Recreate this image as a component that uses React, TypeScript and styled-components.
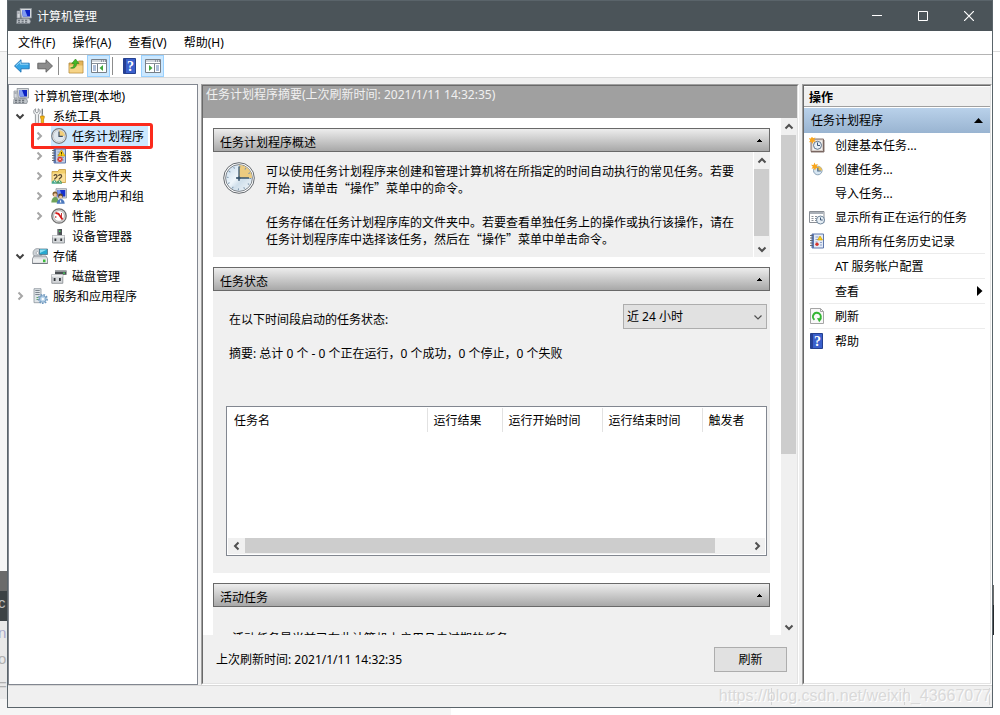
import React from 'react';
import styled, { createGlobalStyle, css } from 'styled-components';

const ui = `"Noto Sans", "Noto Sans CJK SC", sans-serif`;
const cjk = `"Noto Sans CJK SC", "Noto Sans", sans-serif`;

const GlobalStyle = createGlobalStyle`
  *, *::before, *::after { box-sizing: border-box; }
  html, body { margin: 0; padding: 0; background: #fff; }
  body { font: 12px/17px ${ui}; color: #000; overflow: hidden; }
  button, select { font: inherit; color: inherit; }
  button { background: none; border: 0; padding: 0; margin: 0; text-align: left; }
  svg { display: block; flex: none; }
  ul { list-style: none; margin: 0; padding: 0; }
  h1, h2, p { margin: 0; font: inherit; }
`;

/* ---------- page behind the window ---------- */

const Desktop = styled.div`
  display: grid;
  grid-template-columns: 7px minmax(0, 1fr) 7px;
  height: 100vh;
`;

const Sliver = styled.div`
  display: flex;
  flex-direction: column;
  overflow: hidden;
`;

const Strip = styled.div<{ $bg: string; $h?: number; $line?: boolean; $fg?: string }>`
  background: ${p => p.$bg};
  color: ${p => p.$fg || '#b0b0b0'};
  ${p => (p.$h ? css`flex: none; height: ${p.$h}px;` : css`flex: 1;`)}
  ${p => p.$line && css`border-bottom: 1px solid #dcdcdc;`}
  font: 15px/24px "Liberation Sans", sans-serif;
  text-indent: -2px;
  overflow: hidden;
`;

const EdgeStrip = styled(Strip)`
  width: 1px;
`;

const Centre = styled.div`
  display: flex;
  flex-direction: column;
  min-height: 0;
`;

const BelowWindow = styled.div`
  flex: none;
  height: 7px;
  background: linear-gradient(to right, #f5f5f5 45%, #fff 45%);
`;

/* ---------- window frame ---------- */

const Window = styled.main`
  flex: 1;
  min-height: 0;
  display: flex;
  flex-direction: column;
  background: #f0f0f0;
  border: solid #5a646a;
  border-width: 0 1px 1px;
`;

const TitleBar = styled.header`
  flex: none;
  display: flex;
  align-items: center;
  height: 31px;
  padding-left: 8px;
  background: #4b5459;
  border-top: 1px solid #5a646a;
  color: #fff;
  h1 { flex: 1; margin-left: 5px; }
`;

const CaptionButton = styled.button`
  display: flex;
  align-items: center;
  justify-content: center;
  width: 46px;
  height: 30px;
`;

const MenuBar = styled.nav`
  flex: none;
  display: flex;
  gap: 1px;
  height: 24px;
  padding: 0 2px;
  background: #fff;
  border-bottom: 1px solid #b4b4b4;
`;

const MenuButton = styled.button`
  padding: 0 8px;
`;

const ToolBar = styled.div`
  flex: none;
  display: flex;
  align-items: center;
  height: 23px;
  padding-left: 2px;
  background: #fff;
  border-bottom: 1px solid #dadada;
`;

const ToolButton = styled.button<{ $on?: boolean }>`
  display: flex;
  align-items: center;
  justify-content: center;
  width: 23px;
  height: 22px;
  border: 1px solid ${p => (p.$on ? '#99d1ff' : 'transparent')};
  background: ${p => (p.$on ? '#cce8ff' : 'transparent')};
`;

const ToolRule = styled.span`
  width: 1px;
  height: 18px;
  margin: 0 5px 0 2px;
  background: #8c8c8c;
`;

const Workspace = styled.div`
  flex: 1;
  min-height: 0;
  display: flex;
  padding-top: 6px;
`;

const StatusBar = styled.footer`
  flex: none;
  display: flex;
  justify-content: flex-end;
  height: 22px;
  padding: 2px 2px 2px 0;
  border-top: 1px solid #d7d7d7;
`;

const StatusCell = styled.span<{ $w: number }>`
  width: ${p => p.$w}px;
  border-right: 1px solid #d4d4d4;
`;

const StatusText = styled.span`
  position: absolute;
  right: 9px;
  bottom: 8px;
  font: 16px/22px "Liberation Sans", sans-serif;
  color: #d9d9d9;
  text-shadow: 1px 1px 0 #fff;
`;

/* ---------- navigation tree ---------- */

const TreePane = styled.ul`
  flex: none;
  width: 190px;
  padding: 1px 4px;
  background: #fff;
  border: 1px solid #828790;
`;

const TreeRow = styled.li<{ $level: number }>`
  display: flex;
  align-items: center;
  height: 20px;
  padding-left: ${p => (p.$level === 2 ? 19 : 0)}px;
  position: relative;
`;

const Twisty = styled.button`
  display: flex;
  align-items: center;
  justify-content: center;
  width: 19px;
  height: 20px;
  padding-right: 5px;
`;

const TreeLabel = styled.button<{ $selected?: boolean }>`
  display: flex;
  align-items: center;
  gap: 5px;
  height: 20px;
  padding-right: 4px;
  background: ${p => (p.$selected ? '#cce8ff' : 'transparent')};
`;

const Marker = styled.span`
  position: absolute;
  left: 18px;
  top: -3px;
  width: 122px;
  height: 26px;
  border: 3px solid #fb2a1c;
  border-radius: 3px;
  pointer-events: none;
`;

/* ---------- centre pane ---------- */

const sunken = css`
  border: 1px solid;
  border-color: #a0a0a0 #fff #fff #a0a0a0;
`;

const sunkenInner = css`
  border: 1px solid;
  border-color: #696969 #e3e3e3 #e3e3e3 #696969;
`;

const SummaryPane = styled.section`
  flex: 1;
  min-width: 0;
  display: flex;
  margin: 0 3px;
  ${sunken}
`;

const PaneInner = styled.div`
  flex: 1;
  min-width: 0;
  display: flex;
  flex-direction: column;
  ${sunkenInner}
`;

const PaneTitle = styled.h2`
  flex: none;
  height: 32px;
  padding: 0 3px;
  background: #a0a0a0;
  color: #f0f0f0;
`;

const ScrollArea = styled.div`
  flex: 1;
  min-height: 0;
  display: flex;
  background: #fff;
`;

const Sections = styled.div`
  flex: 1;
  min-width: 0;
  display: flex;
  flex-direction: column;
  gap: 10px;
  padding: 10px 11px 0 10px;
  overflow: hidden;
`;

const Section = styled.section`
  flex: none;
  background: #f0f0f0;
`;

const SectionTitle = styled.button`
  display: flex;
  align-items: center;
  justify-content: space-between;
  width: 100%;
  height: 24px;
  padding: 4px 7px 0 6px;
  border: 1px solid #696969;
  background: linear-gradient(#ededed, #a8a8a8);
  svg { margin-bottom: 4px; }
`;

const Overview = styled.div`
  display: flex;
`;

const OverviewBody = styled.div`
  flex: 1;
  display: flex;
  align-items: flex-start;
  gap: 11px;
  padding: 10px 18px 10px 10px;
  border-right: 1px solid #fff;
`;

const OverviewText = styled.div`
  font-family: ${cjk};
  p + p { margin-top: 17px; }
`;

const StatusBody = styled.div`
  padding: 13px 3px 17px 13px;
`;

const FilterRow = styled.div`
  display: flex;
  align-items: center;
  justify-content: space-between;
  padding-left: 3px;
  label { padding-top: 5px; }
`;

const SelectBox = styled.div`
  display: grid;
  width: 144px;
  > * { grid-area: 1 / 1; }
  svg { align-self: center; justify-self: end; margin-right: 4px; pointer-events: none; }
`;

const Select = styled.select`
  appearance: none;
  height: 25px;
  padding: 0 3px;
  border: 1px solid #adadad;
  border-radius: 0;
  background: #e1e1e1;
`;

const SummaryLine = styled.p`
  margin: 16px 0 44px;
  padding-left: 3px;
`;

const ListBox = styled.div`
  display: flex;
  flex-direction: column;
  justify-content: space-between;
  height: 150px;
  padding: 1px;
  background: #fff;
  border: 1px solid #828790;
`;

const Table = styled.table`
  width: 100%;
  table-layout: fixed;
  border-collapse: collapse;
`;

const Th = styled.th<{ $w?: number }>`
  ${p => p.$w && css`width: ${p.$w}px;`}
  height: 24px;
  padding: 0 0 0 6px;
  font-weight: 400;
  text-align: left;
  white-space: nowrap;
  border-right: 1px solid #e2e2e2;
  &:last-child { border-right: 0; }
`;

const ActiveText = styled.p`
  padding: 23px 19px;
`;

const PaneFooter = styled.div`
  flex: none;
  display: flex;
  align-items: center;
  justify-content: space-between;
  height: 48px;
  padding: 0 10px 0 13px;
`;

const PushButton = styled.button`
  width: 73px;
  height: 25px;
  text-align: center;
  border: 1px solid #adadad;
  background: #e1e1e1;
`;

/* ---------- scroll bars ---------- */

const VBar = styled.div`
  flex: none;
  display: flex;
  flex-direction: column;
  width: 16px;
  padding-right: 1px;
  background: #f0f0f0;
`;

const HBar = styled.div`
  display: flex;
  height: 16px;
  padding-bottom: 1px;
  background: #f0f0f0;
`;

const Arrow = styled.button<{ $wide?: boolean }>`
  flex: none;
  display: flex;
  align-items: center;
  justify-content: center;
  width: ${p => (p.$wide ? '17px' : '100%')};
  height: ${p => (p.$wide ? '15px' : '17px')};
`;

const Track = styled.div<{ $row?: boolean }>`
  flex: 1;
  min-height: 0;
  display: flex;
  flex-direction: ${p => (p.$row ? 'row' : 'column')};
`;

const Thumb = styled.div<{ $size: string }>`
  flex: 0 0 ${p => p.$size};
  background: #cdcdcd;
`;

/* ---------- action pane ---------- */

const ActionPane = styled.aside`
  flex: none;
  width: 190px;
  display: flex;
  ${sunken}
`;

const ActionInner = styled(PaneInner)`
  background: #fff;
`;

const ActionTitle = styled.h2`
  height: 21px;
  padding: 2px 5px;
  font-weight: 700;
  background: #f0f0f0;
  border-top: 1px solid #fff;
  border-bottom: 1px solid #a0a0a0;
`;

const ActionGroup = styled.button`
  display: flex;
  align-items: center;
  justify-content: space-between;
  height: 25px;
  margin-top: 1px;
  padding: 0 7px;
  background: linear-gradient(#b9d1ea, #99b4d1);
`;

const ActionList = styled.ul`
  padding: 0 5px;
`;

const ActionItem = styled.li<{ $rule?: boolean }>`
  ${p => p.$rule && css`border-top: 1px solid #ececec;`}
`;

const ActionButton = styled.button`
  display: flex;
  align-items: center;
  width: 100%;
  height: 24px;
  gap: 10px;
  span { flex: 1; }
`;

const IconSlot = styled.i`
  width: 16px;
  height: 16px;
`;

/* ---------- icons ---------- */

const Svg = ({ w = 16, h = 16, children }: { w?: number; h?: number; children: React.ReactNode }) => (
  <svg width={w} height={h} viewBox={`0 0 ${w} ${h}`} fill="none" aria-hidden="true">{children}</svg>
);

const ComputerIcon = () => (
  <Svg>
    <path d="M4 .5h11.500v9.500H5.500z" fill="#d6d9dc" stroke="#8c9298" strokeWidth=".8" />
    <path d="M6 2h8v6.500H6.800z" fill="#0b22c4" />
    <path d="M6 2h3l2.500 6.500H6.800z" fill="#7f9bf0" />
    <path d="M1 3h3.200v7H1z" fill="#d4d8dc" stroke="#8d949b" strokeWidth=".7" />
    <path d="M1.500 5h2" stroke="#6f767d" strokeWidth=".8" />
    <path d="M6.500 9.500h6v1.500h-6z" fill="#9aa1a8" />
    <path d="M1 10.800h12.500l1 2.500-.8 2.200H.5z" fill="#c1c6cb" stroke="#7d848b" strokeWidth=".7" />
    <path d="M2 12.300h2.200M5.500 12.300h2.200M9 12.300h2.200M2 14.200h2.200M5.500 14.200h2.200M9 14.200h2.200" stroke="#565d64" />
  </Svg>
);

const ToolsIcon = () => (
  <Svg>
    <path d="M3.600 .8v3l1.300 1 1.300-1v-3c1.400.6 2 1.800 2 3S7.500 6 6.600 6.500V14.500c0 1.300-3.200 1.300-3.200 0V6.500C2.400 6 1.700 5 1.700 3.800s.6-2.400 1.900-3z" fill="#eceeef" stroke="#7d8388" strokeWidth=".8" />
    <path d="M10.300 .7v5.500" stroke="#70767b" strokeWidth="1.300" />
    <path d="M10.300 6v3" stroke="#9aa0a5" strokeWidth="1.600" />
    <path d="M8.600 8h3.600v2l-.6 1v3.500c0 1-2.400 1-2.400 0V11l-.6-1z" fill="#f5b816" stroke="#b97c05" strokeWidth=".7" />
  </Svg>
);

const SmallClockIcon = () => (
  <Svg>
    <circle cx="8" cy="8" r="7.300" fill="#f0f1f2" stroke="#767d84" strokeWidth="1.200" />
    <circle cx="8" cy="8" r="5.800" fill="#dfe7ee" stroke="#a9afb5" strokeWidth=".5" />
    <path d="M8 8V2.200A5.800 5.800 0 0 1 13.800 8z" fill="#f2cf7c" />
    <path d="M8 3.500V8.300h3.800" stroke="#3c4f66" strokeWidth="1.200" />
  </Svg>
);

const LogIcon = ({ alert }: { alert?: boolean }) => (
  <Svg>
    <path d="M3 1h11.500v14H3z" fill={alert ? '#c3d0e6' : '#e4ebf7'} stroke="#5f79ad" />
    <path d="M3 1h2v14H3z" fill="#5c78b2" />
    <path d="M1 2.500h3M1 5h3M1 7.500h3M1 10h3M1 12.500h3" stroke="#5b6068" strokeWidth=".9" />
    <path d="M6.500 4h3M6.500 6.500h3M6.500 9h2M11 9.500h2M11 12h2" stroke="#7890bb" strokeWidth=".8" />
    <path d={alert ? 'M10.500 2l3.700 6H6.800z' : 'M11 3l2.500 4h-5z'} fill="#fbd016" stroke="#c79000" strokeWidth=".6" />
    {alert && <path d="M10.500 4v2M10.500 6.600v.8" stroke="#332900" strokeWidth=".9" />}
    <circle cx={alert ? 9 : 8} cy="11.300" r={alert ? 2.600 : 1.700} fill="#d8352c" />
    {alert && <path d="M8 10.300l2 2m0-2l-2 2" stroke="#fff" strokeWidth=".8" />}
  </Svg>
);

const SharedFolderIcon = () => (
  <Svg>
    <path d="M1 3.500h6l1-2h6.500v13H1z" fill="#f3cf6b" stroke="#c2973a" strokeWidth=".8" />
    <path d="M1.500 5.500h12.800V14H1.500z" fill="#fbe09a" />
    <path d="M3 8c.3-1.800 3-1.700 3 .2 0 1.300-2.200 1.600-2.500 3.300M7.600 8c.3-1.800 3-1.700 3 .2 0 1.300-2.200 1.600-2.500 3.300" stroke="#5d4a30" strokeWidth="1.300" />
    <path d="M.6 15.800c0-4.600 5.400-4.600 5.400 0z" fill="#46a98f" />
    <path d="M5.600 15.800c0-4.600 5.400-4.600 5.400 0z" fill="#4c9d6c" />
    <path d="M3.200 13l1 1.600M8.200 13l1 1.600" stroke="#fff" strokeWidth=".8" />
  </Svg>
);

const UsersIcon = () => (
  <Svg>
    <path d="M5 .7h10.500V10H5z" fill="#d6dade" stroke="#8b9299" strokeWidth=".8" />
    <path d="M6.300 2h8v6.500h-8z" fill="#1530cf" />
    <path d="M6.300 2H9l2 6.500H6.300z" fill="#7a97ef" />
    <circle cx="4" cy="6" r="2.500" fill="#7d5a2c" />
    <circle cx="4.200" cy="7" r="1.700" fill="#f0c79c" />
    <path d="M.3 14.500c0-7.500 7.500-7.500 7.500 0z" fill="#6fa35a" />
    <circle cx="9.500" cy="8" r="2.400" fill="#5a4630" />
    <circle cx="9.600" cy="9" r="1.600" fill="#f0c79c" />
    <path d="M5.700 15.800c0-6.500 8-6.500 8 0z" fill="#4c79bd" />
    <path d="M9.600 11.500l-.8 3h1.600z" fill="#fff" />
  </Svg>
);

const PerformanceIcon = () => (
  <Svg>
    <circle cx="8" cy="8" r="7.200" fill="#dcdcdc" stroke="#6d6d6d" strokeWidth="1.300" />
    <circle cx="8" cy="8" r="5.400" fill="#fff" stroke="#9a9a9a" strokeWidth=".7" />
    <path d="M4.500 4.800l3 1 4 5.700" stroke="#d61a1a" strokeWidth="1.800" />
    <path d="M10.500 5v4M4.800 8v2" stroke="#c4393a" />
  </Svg>
);

const DeviceIcon = () => (
  <Svg>
    <path d="M6.500 1h4.500v7H6.500z" fill="#4c5054" />
    <path d="M8 2.500h1.500V4H8z" fill="#45d45c" />
    <path d="M6.500 1h1v7h-1z" fill="#85898d" />
    <path d="M1.500 7.500h12v7.500h-12z" fill="#d4d7da" stroke="#83888d" strokeWidth=".8" />
    <path d="M1.500 7.500h12v2h-12z" fill="#f1f2f3" />
    <path d="M3.500 10.500h1.800v2.500H3.500zM9.300 10.500h1.800v2.500H9.300z" fill="#33373b" />
  </Svg>
);

const StorageIcon = () => (
  <Svg>
    <circle cx="5.500" cy="5" r="4.500" fill="#ced3d8" stroke="#8a9197" strokeWidth=".7" />
    <circle cx="5.500" cy="5" r="1.400" fill="#fff" stroke="#8a9197" strokeWidth=".6" />
    <path d="M7.500 1h8v5.500h-8z" fill="#28a8cf" stroke="#49697a" strokeWidth=".7" />
    <path d="M8 1.500h7L8 5z" fill="#8fe0f2" />
    <path d="M2 8h12l1.500 2.500v5H.5v-5z" fill="#d3d6d9" stroke="#7e848a" strokeWidth=".8" />
    <path d="M1 10.500h14v4.700H1z" fill="#eceeef" />
    <path d="M11 11.500h2.500v2.700H11z" fill="#3cbb3c" />
    <path d="M.5 15.400h15" stroke="#6f757b" />
  </Svg>
);

const DiskIcon = () => (
  <Svg>
    <path d="M4 2.500h11.500v4.300H4z" fill="#4b4f53" />
    <path d="M4 2.500h11.500v1.300H4z" fill="#a5a9ad" />
    <path d="M12 4.500h2v1.200h-2z" fill="#45d45c" />
    <path d="M.8 6.500h11v8.800H.8z" fill="#d4d7da" stroke="#83888d" strokeWidth=".8" />
    <path d="M.8 6.500h11v2.200H.8z" fill="#f1f2f3" />
    <path d="M2.700 10h1.800v3H2.700zM8 10h1.800v3H8z" fill="#33373b" />
  </Svg>
);

const ServicesIcon = () => (
  <Svg>
    <path d="M2 .7h7v14H2z" fill="#dfe4e8" stroke="#8b949c" strokeWidth=".8" />
    <path d="M3.300 2.500h4.400M3.300 4.500h4.400M3.300 6.500h4.400" stroke="#7d878f" />
    <path d="M4.500 9.500h2M4.500 11.500h2" stroke="#5ea55e" />
    <circle cx="10.800" cy="11" r="4.300" stroke="#6e98bf" strokeWidth="1.600" strokeDasharray="1.700 1.200" />
    <circle cx="10.800" cy="11" r="3.300" fill="#b9d4ea" stroke="#6e98bf" strokeWidth=".9" />
    <circle cx="10.800" cy="11" r="1.200" fill="#fff" />
  </Svg>
);

const BigClockIcon = () => (
  <Svg w={32} h={32}>
    <defs>
      <linearGradient id="face" x1="0" y1="0" x2="1" y2="1">
        <stop offset="0" stopColor="#c5d9ea" />
        <stop offset=".45" stopColor="#eff6fb" />
        <stop offset=".6" stopColor="#cfdfeb" />
        <stop offset="1" stopColor="#f7fafc" />
      </linearGradient>
    </defs>
    <circle cx="16" cy="16" r="15.300" fill="#fff" stroke="#62676c" />
    <circle cx="16" cy="16" r="13.400" fill="url(#face)" stroke="#80868c" />
    <path d="M16 16V3a13 13 0 0 1 13 13z" fill="#eccb80" />
    <circle cx="16" cy="16" r="11.300" stroke="#7d96ad" strokeWidth="1.800" strokeDasharray="1 4.917" />
    <path d="M16 4.500V19M13 16h13" stroke="#39566e" strokeWidth="1.300" />
    <circle cx="16" cy="16" r="1.600" fill="#39566e" />
  </Svg>
);

const ArrowIcon = ({ forward }: { forward?: boolean }) => (
  <Svg>
    {forward
      ? <path d="M15.500 8L9 1.800v3.400H.8v5.600H9v3.400z" fill="#8c8c8c" stroke="#5f5f5f" strokeWidth=".9" />
      : <>
          <path d="M.5 8L7 1.800v3.400h8.200v5.600H7v3.400z" fill="#35a5e6" stroke="#1b6fb3" strokeWidth=".9" />
          <path d="M2.200 7.600L6.300 3.700v2.500h8" stroke="#a5dcf8" strokeWidth=".9" />
        </>}
  </Svg>
);

const FolderUpIcon = () => (
  <Svg>
    <path d="M1 5h8l1.500-2H15v12H1z" fill="#e3b458" stroke="#b0883b" strokeWidth=".8" />
    <path d="M1.500 7.500h13v7h-13z" fill="#f6d488" />
    <path d="M2.500 10c3-.5 3.700-2.500 3.500-4.500H3.800L7.500 1 11 5.500H8.500c0 3.500-2 5.500-6 4.500z" fill="#45b828" stroke="#2b8318" strokeWidth=".6" />
  </Svg>
);

const PaneIcon = ({ right }: { right?: boolean }) => (
  <Svg>
    <path d="M.5 1.500h15v13H.5z" fill="#fff" stroke="#777f88" />
    <path d="M1 2h14v2H1z" fill="#d3d8de" />
    <path d="M10 3h1M12 3h1M14 3h1" stroke="#565d66" />
    <path d="M1 5.500h14" stroke="#8a929b" />
    {right
      ? <>
          <path d="M9.500 6v8.500" stroke="#777f88" />
          <path d="M11 8h3M11 10h3M11 12h3" stroke="#5c7fb5" />
          <path d="M4 7v6l3.500-3z" fill="#40a83c" />
        </>
      : <>
          <path d="M6.500 6v8.500" stroke="#777f88" />
          <path d="M2 8h3M2 10h3M2 12h3" stroke="#5c7fb5" />
          <path d="M12 7v6l-3.500-3z" fill="#40a83c" />
        </>}
  </Svg>
);

const HelpIcon = () => (
  <Svg>
    <path d="M1.500 .5h12v15h-12z" fill="#3a60cc" stroke="#24408f" />
    <path d="M2 1h2v14H2z" fill="#263f94" />
    <text x="5" y="13" fontFamily="Liberation Serif, serif" fontWeight="700" fontSize="14" fill="#fff">?</text>
  </Svg>
);

const star = 'M4 0l.9 2.300L7.500 1.500 6 3.800 8 5.500l-2.600.2L4.500 8 3.400 5.800 1 6.200l1.300-2L.5 2.200l2.500.3z';

const BasicTaskIcon = () => (
  <Svg>
    <path d="M2 2h12.500v12.500H2z" fill="#d5cdc8" stroke="#84706b" />
    <path d="M3.500 3.500h9.500v9.500H3.500z" fill="#f6f3f1" />
    <circle cx="8.500" cy="8.300" r="4" fill="#e8eff5" stroke="#60758c" />
    <path d="M8.500 5.500v3h2.500" stroke="#3d5675" />
    <path d={star} fill="#f9a51b" transform="translate(-1 -1)" />
    <path d="M2 15h13V3" stroke="#6a5854" strokeWidth=".8" />
  </Svg>
);

const TaskIcon = () => (
  <Svg>
    <circle cx="8.800" cy="9.500" r="4.300" fill="#d7e6f2" stroke="#8ca3b8" />
    <path d="M8.800 9.500V5.200a4.300 4.300 0 0 1 4.300 4.300z" fill="#f0c050" />
    <path d="M8.800 6.500V10h3" stroke="#4d6c8c" strokeWidth="1.200" />
    <path d={star} fill="#f9a51b" transform="translate(1.500 1.500)" />
  </Svg>
);

const RunningIcon = () => (
  <Svg>
    <path d="M.5 2.500h14.500v11H.5z" fill="#fff" stroke="#8b9097" />
    <path d="M1 3h13.500v2H1z" fill="#a9afb7" />
    <path d="M2.500 7.500h2M6 7.500h2M9.500 7.500h2M2.500 9.500h2M6 9.500h2M2.500 11.500h2M6 11.500h2" stroke="#8b9097" />
    <circle cx="11.500" cy="11" r="4" fill="#e6eef5" stroke="#71879d" />
    <path d="M11.500 8.500V11h2.200" stroke="#3d5675" />
  </Svg>
);

const RefreshIcon = () => (
  <Svg>
    <path d="M1.500 .5h10l3 3v12h-13z" fill="#f8f8f8" stroke="#a5a5a5" />
    <path d="M11.500 .5v3h3" stroke="#a5a5a5" />
    <path d="M5.500 11.800A3.900 3.900 0 1 1 11 11" stroke="#33b533" strokeWidth="2" />
    <path d="M8 10l5 .5-2.800 3.800z" fill="#33b533" />
  </Svg>
);

const chevrons = {
  up: 'M1.500 6.500L5 3l3.500 3.500',
  down: 'M1.500 3.500L5 7l3.500-3.500',
  left: 'M6.500 1.500L3 5l3.500 3.500',
  right: 'M3.500 1.500L7 5 3.500 8.500',
};

const Chevron = ({ dir, thin, color = '#505050' }: { dir: keyof typeof chevrons; thin?: boolean; color?: string }) => (
  <Svg w={10} h={10}><path d={chevrons[dir]} stroke={color} strokeWidth={thin ? 1.2 : 2} /></Svg>
);

/* ---------- data ---------- */

type Node = { text: string; level: 0 | 1 | 2; icon: React.ReactNode; open?: boolean; leaf?: boolean; selected?: boolean };

const nodes: Node[] = [
  { text: '计算机管理(本地)', level: 0, icon: <ComputerIcon /> },
  { text: '系统工具', level: 1, icon: <ToolsIcon />, open: true },
  { text: '任务计划程序', level: 2, icon: <SmallClockIcon />, selected: true },
  { text: '事件查看器', level: 2, icon: <LogIcon alert /> },
  { text: '共享文件夹', level: 2, icon: <SharedFolderIcon /> },
  { text: '本地用户和组', level: 2, icon: <UsersIcon /> },
  { text: '性能', level: 2, icon: <PerformanceIcon /> },
  { text: '设备管理器', level: 2, icon: <DeviceIcon />, leaf: true },
  { text: '存储', level: 1, icon: <StorageIcon />, open: true },
  { text: '磁盘管理', level: 2, icon: <DiskIcon />, leaf: true },
  { text: '服务和应用程序', level: 1, icon: <ServicesIcon /> },
];

const actions: { text: string; icon?: React.ReactNode; rule?: boolean; sub?: boolean }[] = [
  { text: '创建基本任务...', icon: <BasicTaskIcon /> },
  { text: '创建任务...', icon: <TaskIcon /> },
  { text: '导入任务...' },
  { text: '显示所有正在运行的任务', icon: <RunningIcon /> },
  { text: '启用所有任务历史记录', icon: <LogIcon /> },
  { text: 'AT 服务帐户配置', rule: true },
  { text: '查看', rule: true, sub: true },
  { text: '刷新', icon: <RefreshIcon />, rule: true },
  { text: '帮助', icon: <HelpIcon />, rule: true },
];

const columns: [string, number?][] = [
  ['任务名', 199], ['运行结果', 75], ['运行开始时间', 100], ['运行结束时间', 100], ['触发者'],
];

const Header = ({ children }: { children: string }) => (
  <SectionTitle>
    {children}
    <Svg w={5} h={3}><path d="M2 0h1v1h1v1h1v1H0V2h1V1h1z" fill="#000" /></Svg>
  </SectionTitle>
);

const VScroll = ({ thumb }: { thumb: string }) => (
  <VBar>
    <Arrow aria-label="向上"><Chevron dir="up" /></Arrow>
    <Track><Thumb $size={thumb} /></Track>
    <Arrow aria-label="向下"><Chevron dir="down" /></Arrow>
  </VBar>
);

export default function App() {
  return (
    <>
      <GlobalStyle />
      <Desktop>
        <Sliver>
          <Strip $bg="#fff" $h={52} $line />
          <Strip $bg="#f5f5f5" />
          <Strip $bg="#6b6b6b" $h={20} />
          <Strip $bg="#3c4245" $h={30} $fg="#c0c0c0">c</Strip>
          <Strip $bg="#e9e9e9" $h={26} $fg="#a9a9cc">n</Strip>
          <Strip $bg="#e9e9e9" $h={26}>o</Strip>
          <Strip $bg="#e9e9e9" $h={26}>=</Strip>
          <Strip $bg="#f5f5f5" $h={16} />
        </Sliver>

        <Centre>
          <Window>
            <TitleBar>
              <ComputerIcon />
              <h1>计算机管理</h1>
              <CaptionButton aria-label="最小化"><Svg w={10} h={10}><path d="M0 4.500h10" stroke="#fff" /></Svg></CaptionButton>
              <CaptionButton aria-label="最大化"><Svg w={10} h={10}><path d="M.5 .5h9v9h-9z" stroke="#fff" /></Svg></CaptionButton>
              <CaptionButton aria-label="关闭"><Svg w={10} h={10}><path d="M0 0l10 10M10 0L0 10" stroke="#fff" strokeWidth="1.200" /></Svg></CaptionButton>
            </TitleBar>

            <MenuBar>
              {['文件(F)', '操作(A)', '查看(V)', '帮助(H)'].map(m => <MenuButton key={m}>{m}</MenuButton>)}
            </MenuBar>

            <ToolBar>
              <ToolButton aria-label="后退"><ArrowIcon /></ToolButton>
              <ToolButton aria-label="前进"><ArrowIcon forward /></ToolButton>
              <ToolRule />
              <ToolButton aria-label="上一级"><FolderUpIcon /></ToolButton>
              <ToolButton aria-label="显示树" $on><PaneIcon /></ToolButton>
              <ToolRule />
              <ToolButton aria-label="帮助"><HelpIcon /></ToolButton>
              <ToolButton aria-label="显示操作" $on><PaneIcon right /></ToolButton>
            </ToolBar>

            <Workspace>
              <TreePane>
                {nodes.map(n => (
                  <TreeRow key={n.text} $level={n.level}>
                    {n.level > 0 && (
                      <Twisty aria-label={n.text} disabled={n.leaf}>
                        {!n.leaf && <Chevron dir={n.open ? 'down' : 'right'} color={n.open ? '#404040' : '#a6a6a6'} />}
                      </Twisty>
                    )}
                    <TreeLabel $selected={n.selected}>{n.icon}{n.text}</TreeLabel>
                    {n.selected && <Marker />}
                  </TreeRow>
                ))}
              </TreePane>

              <SummaryPane>
                <PaneInner>
                  <PaneTitle>任务计划程序摘要(上次刷新时间: 2021/1/11 14:32:35)</PaneTitle>
                  <ScrollArea>
                    <Sections>
                      <Section>
                        <Header>任务计划程序概述</Header>
                        <Overview>
                          <OverviewBody>
                            <BigClockIcon />
                            <OverviewText>
                              <p>可以使用任务计划程序来创建和管理计算机将在所指定的时间自动执行的常见任务。若要开始，请单击“操作”菜单中的命令。</p>
                              <p>任务存储在任务计划程序库的文件夹中。若要查看单独任务上的操作或执行该操作，请在任务计划程序库中选择该任务，然后在“操作”菜单中单击命令。</p>
                            </OverviewText>
                          </OverviewBody>
                          <VScroll thumb="94%" />
                        </Overview>
                      </Section>

                      <Section>
                        <Header>任务状态</Header>
                        <StatusBody>
                          <FilterRow>
                            <label htmlFor="period">在以下时间段启动的任务状态:</label>
                            <SelectBox>
                              <Select id="period"><option>近 24 小时</option></Select>
                              <Chevron dir="down" thin />
                            </SelectBox>
                          </FilterRow>
                          <SummaryLine>摘要: 总计 0 个 - 0 个正在运行，0 个成功，0 个停止，0 个失败</SummaryLine>
                          <ListBox>
                            <Table>
                              <thead>
                                <tr>{columns.map(([t, w]) => <Th key={t} $w={w}>{t}</Th>)}</tr>
                              </thead>
                            </Table>
                            <HBar>
                              <Arrow $wide aria-label="向左"><Chevron dir="left" /></Arrow>
                              <Track $row><Thumb $size="93.5%" /></Track>
                              <Arrow $wide aria-label="向右"><Chevron dir="right" /></Arrow>
                            </HBar>
                          </ListBox>
                        </StatusBody>
                      </Section>

                      <Section>
                        <Header>活动任务</Header>
                        <ActiveText>活动任务是当前已在此计算机上启用且未过期的任务。</ActiveText>
                      </Section>
                    </Sections>
                    <VScroll thumb="66%" />
                  </ScrollArea>
                  <PaneFooter>
                    <span>上次刷新时间: 2021/1/11 14:32:35</span>
                    <PushButton>刷新</PushButton>
                  </PaneFooter>
                </PaneInner>
              </SummaryPane>

              <ActionPane>
                <ActionInner>
                  <ActionTitle>操作</ActionTitle>
                  <ActionGroup>
                    任务计划程序
                    <Svg w={9} h={5}><path d="M4.500 0L9 5H0z" fill="#000" /></Svg>
                  </ActionGroup>
                  <ActionList>
                    {actions.map(a => (
                      <ActionItem key={a.text} $rule={a.rule}>
                        <ActionButton>
                          {a.icon || <IconSlot />}
                          <span>{a.text}</span>
                          {a.sub && <Svg w={8} h={10}><path d="M0 0l5.500 5L0 10z" fill="#000" /></Svg>}
                        </ActionButton>
                      </ActionItem>
                    ))}
                  </ActionList>
                </ActionInner>
              </ActionPane>
            </Workspace>

            <StatusBar>
              <StatusCell $w={200} />
              <StatusCell $w={133} />
              <StatusCell $w={85} />
              <StatusText>https://blog.csdn.net/weixin_43667077</StatusText>
            </StatusBar>
          </Window>
          <BelowWindow />
        </Centre>

        <Sliver>
          <Strip $bg="#fff" $h={52} $line />
          <Strip $bg="#fff" />
          <EdgeStrip $bg="#6b6b6b" $h={20} />
          <EdgeStrip $bg="#26292b" $h={30} />
          <Strip $bg="#fff" $h={80} />
        </Sliver>
      </Desktop>
    </>
  );
}
